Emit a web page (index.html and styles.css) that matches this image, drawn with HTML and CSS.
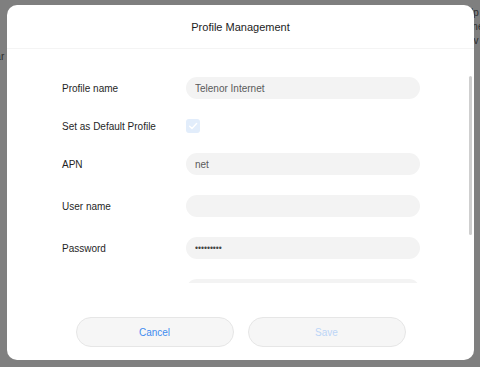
FILE: index.html
```html
<!DOCTYPE html>
<html>
<head>
<meta charset="utf-8">
<link rel="stylesheet" href="styles.css">
</head>
<body>
<div class="backdrop">
  <span class="bg-frag bg-l1">Li</span>
  <span class="bg-frag bg-l2">Mar</span>
  <span class="bg-frag bg-r1">Up</span>
  <span class="bg-frag bg-r2">Conne</span>
  <span class="bg-frag bg-r3">for v</span>
</div>
<div class="dialog">
  <div class="dialog-header">Profile Management</div>
  <div class="dialog-body">
    <div class="row">
      <div class="label">Profile name</div>
      <input class="field" type="text" value="Telenor Internet" readonly>
    </div>
    <div class="row row-check">
      <div class="label">Set as Default Profile</div>
      <span class="checkbox">
        <svg width="14" height="14" viewBox="0 0 14 14"><path d="M3.6 7.2 L6 9.5 L10.6 4.6" fill="none" stroke="#ffffff" stroke-width="1.4" stroke-linecap="round" stroke-linejoin="round"/></svg>
      </span>
    </div>
    <div class="row">
      <div class="label">APN</div>
      <input class="field" type="text" value="net" readonly>
    </div>
    <div class="row">
      <div class="label">User name</div>
      <input class="field" type="text" value="" readonly>
    </div>
    <div class="row">
      <div class="label">Password</div>
      <input class="field field-pass" type="password" value="123456789" readonly>
    </div>
    <div class="row">
      <div class="label">Authentication</div>
      <input class="field" type="text" value="" readonly>
    </div>
  </div>
  <div class="dialog-footer">
    <button class="btn btn-cancel">Cancel</button>
    <button class="btn btn-save">Save</button>
  </div>
  <div class="scroll-thumb"></div>
</div>
</body>
</html>
```
FILE: styles.css
```css
html, body {
  margin: 0;
  padding: 0;
}
body {
  width: 480px;
  height: 367px;
  overflow: hidden;
  background: #7f7f7f;
  font-family: "Liberation Sans", Arial, sans-serif;
  position: relative;
}
.backdrop {
  position: absolute;
  inset: 0;
}
.bg-frag {
  position: absolute;
  font-size: 10px;
  color: #2c2c2c;
  white-space: nowrap;
}
.bg-l1 { left: -8px; top: 16px; color: #25477a; }
.bg-l2 { left: -13px; top: 51px; }
.bg-r1 { left: 466px; top: 7px; }
.bg-r2 { left: 454px; top: 21px; }
.bg-r3 { left: 459px; top: 35px; }

.dialog {
  position: absolute;
  left: 7px;
  top: 5px;
  width: 467px;
  height: 355px;
  background: #ffffff;
  border-radius: 10px;
  display: flex;
  flex-direction: column;
  overflow: hidden;
}
.dialog-header {
  height: 43px;
  flex: none;
  display: flex;
  align-items: center;
  justify-content: center;
  font-size: 11px;
  color: #1c1c1c;
  border-bottom: 1px solid #f4f4f4;
}
.dialog-body {
  height: 234px;
  flex: none;
  overflow: hidden;
  box-sizing: border-box;
  padding: 28px 54px 0 55px;
  display: flex;
  flex-direction: column;
  gap: 20px;
}
.row {
  display: flex;
  align-items: center;
  height: 22px;
  flex: none;
}
.row-check {
  height: 14px;
}
.label {
  width: 124px;
  flex: none;
  font-size: 10px;
  color: #1f1f1f;
}
.field {
  flex: 1;
  height: 22px;
  box-sizing: border-box;
  border: none;
  outline: none;
  background: #f3f3f3;
  border-radius: 11px;
  padding: 0 9px;
  font-family: "Liberation Sans", Arial, sans-serif;
  font-size: 10px;
  color: #5a5a5a;
  margin: 0;
}
.field-pass {
  font-size: 8.5px;
  color: #444;
}
.checkbox {
  width: 14px;
  height: 14px;
  border-radius: 3px;
  background: #e2edfb;
  display: block;
}
.checkbox svg {
  display: block;
}
.dialog-footer {
  flex: 1;
  display: flex;
  justify-content: center;
  align-items: flex-start;
  gap: 14px;
  padding-top: 34px;
  box-sizing: border-box;
}
.btn {
  width: 158px;
  height: 30px;
  border-radius: 15px;
  background: #f6f6f6;
  border: 1px solid #e6e6e6;
  font-family: "Liberation Sans", Arial, sans-serif;
  font-size: 10px;
  padding: 0;
}
.btn-cancel { color: #3f8cf0; }
.btn-save { color: #bcd5f6; }
.scroll-thumb {
  position: absolute;
  left: 462px;
  top: 71px;
  width: 3px;
  height: 159px;
  border-radius: 2px;
  background: #cfcfcf;
}
```
